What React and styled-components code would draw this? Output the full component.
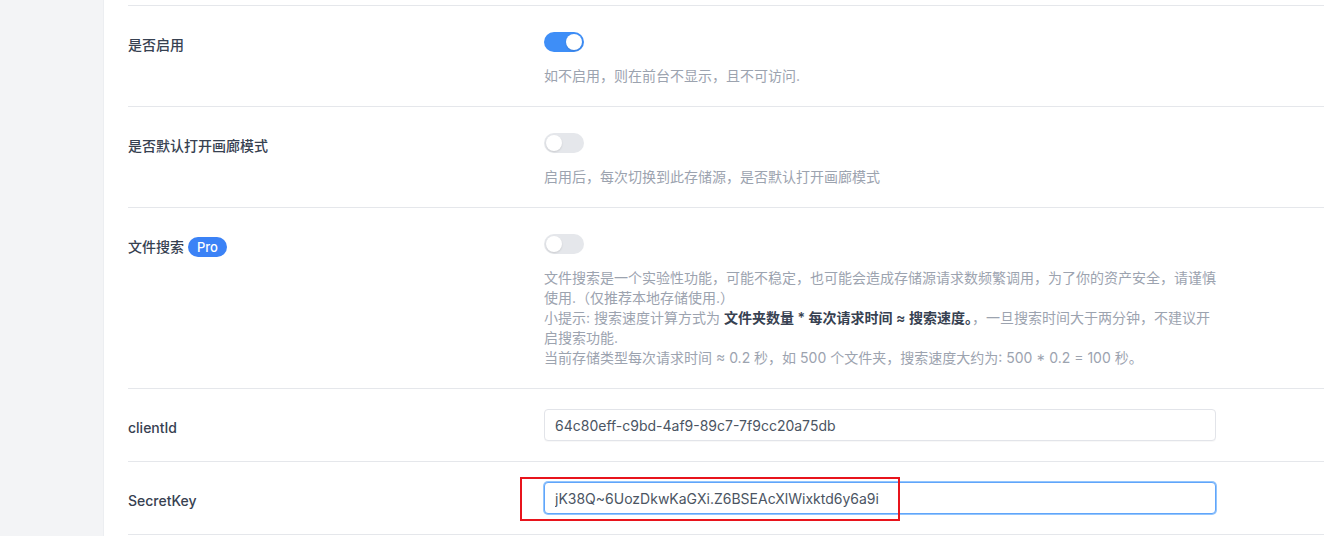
import React from 'react'
import styled, { createGlobalStyle } from 'styled-components'

const GlobalStyle = createGlobalStyle`
  html, body {
    margin: 0;
    padding: 0;
    background: #fff;
    overflow: hidden;
  }
  body {
    font-family: Inter, "Noto Sans CJK SC", "Liberation Sans", sans-serif;
    -webkit-font-smoothing: antialiased;
  }
`

const Page = styled.div`
  display: flex;
  width: 1324px;
  height: 536px;
  overflow: hidden;
`

const Sidebar = styled.div`
  flex: 0 0 103px;
  background-color: #f3f4f6;
  border-right: 1px solid #eceef1;
`

const Main = styled.div`
  flex: 1;
  padding-left: 24px;
  padding-top: 5px;
  min-width: 0;
`

const Form = styled.div`
  width: 1232px;
`

const Row = styled.div`
  position: relative;
  display: grid;
  grid-template-columns: repeat(3, minmax(0, 1fr));
  gap: 16px;
  align-items: start;
  padding: 20px 0;
  border-top: 1px solid #e5e7eb;
  &:last-child {
    border-bottom: 1px solid #e5e7eb;
  }
`

const Label = styled.label`
  display: flex;
  align-items: center;
  gap: 4px;
  margin-top: 1px;
  padding-top: 8px;
  font-size: 14px;
  line-height: 20px;
  font-weight: 500;
  color: #374151;
`

const Badge = styled.span`
  display: inline-flex;
  align-items: center;
  height: 20px;
  padding: 0 9px;
  border-radius: 10px;
  background-color: #3b82f6;
  color: #fff;
  font-size: 13px;
  font-weight: 500;
`

const Control = styled.div`
  grid-column: span 2 / span 2;
`

const SwitchWrap = styled.div`
  height: 32px;
  display: flex;
  align-items: center;
`

const Switch = styled.button`
  position: relative;
  width: 40px;
  height: 20px;
  padding: 0;
  border: none;
  border-radius: 10px;
  background-color: ${props => (props.on ? '#3e8ef7' : '#e5e7eb')};
  cursor: pointer;
  &::after {
    content: '';
    position: absolute;
    top: 2px;
    left: ${props => (props.on ? '22px' : '2px')};
    width: 16px;
    height: 16px;
    border-radius: 50%;
    background: #fff;
    box-shadow: 0 1px 2px rgba(0, 0, 0, 0.12);
  }
`

const Help = styled.div`
  margin-top: 8px;
  max-width: 672px;
  font-size: 14px;
  line-height: 20px;
  color: #9ca3af;
  strong {
    color: #374151;
    font-weight: 600;
  }
`

const Input = styled.input`
  display: block;
  box-sizing: border-box;
  width: 100%;
  max-width: 672px;
  height: 32px;
  padding: 0 10px;
  border: 1px solid ${props => (props.focused ? '#60a5fa' : '#e2e4e9')};
  border-radius: 4px;
  box-shadow: ${props => (props.focused ? '0 0 0 1px #93c5fd' : '0 1px 1px rgba(0,0,0,0.03)')};
  font-family: Inter, "Liberation Sans", sans-serif;
  font-size: 14px;
  color: #4b5563;
  outline: none;
  background: #fff;
`

const Marker = styled.div`
  position: absolute;
  left: 392px;
  top: 15px;
  width: 376px;
  height: 40px;
  border: 2px solid #e8141c;
  pointer-events: none;
`

export default function App() {
  return (
    <Page>
      <GlobalStyle />
      <Sidebar />
      <Main>
        <Form>
          <Row>
            <Label>是否启用</Label>
            <Control>
              <SwitchWrap><Switch on /></SwitchWrap>
              <Help>如不启用，则在前台不显示，且不可访问.</Help>
            </Control>
          </Row>
          <Row>
            <Label>是否默认打开画廊模式</Label>
            <Control>
              <SwitchWrap><Switch /></SwitchWrap>
              <Help>启用后，每次切换到此存储源，是否默认打开画廊模式</Help>
            </Control>
          </Row>
          <Row>
            <Label>文件搜索<Badge>Pro</Badge></Label>
            <Control>
              <SwitchWrap><Switch /></SwitchWrap>
              <Help>
                文件搜索是一个实验性功能，可能不稳定，也可能会造成存储源请求数频繁调用，为了你的资产安全，请谨慎使用.（仅推荐本地存储使用.）
                <br />
                小提示: 搜索速度计算方式为 <strong>文件夹数量 * 每次请求时间 ≈ 搜索速度。</strong>，一旦搜索时间大于两分钟，不建议开启搜索功能.
                <br />
                当前存储类型每次请求时间 ≈ 0.2 秒，如 500 个文件夹，搜索速度大约为: 500 * 0.2 = 100 秒。
              </Help>
            </Control>
          </Row>
          <Row>
            <Label>clientId</Label>
            <Control>
              <Input readOnly value="64c80eff-c9bd-4af9-89c7-7f9cc20a75db" />
            </Control>
          </Row>
          <Row>
            <Label>SecretKey</Label>
            <Control>
              <Input focused readOnly value="jK38Q~6UozDkwKaGXi.Z6BSEAcXlWixktd6y6a9i" />
            </Control>
            <Marker />
          </Row>
        </Form>
      </Main>
    </Page>
  )
}
